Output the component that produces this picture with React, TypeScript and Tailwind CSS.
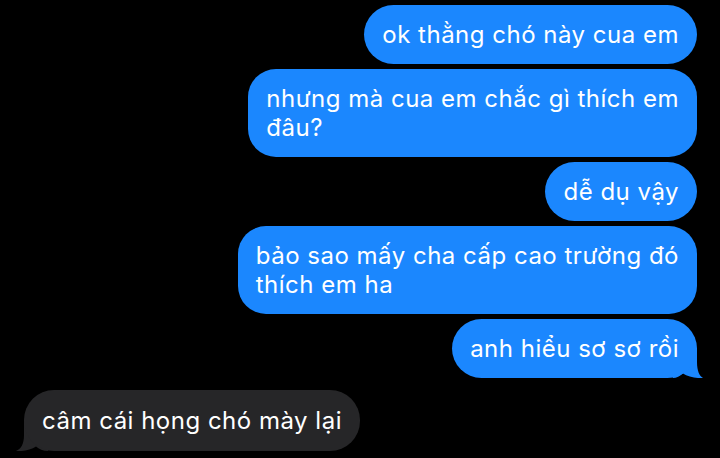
import React from "react";

const BLUE = "#1b87fe";

function TailRight() {
  return (
    <svg
      className="absolute bottom-0 right-[-6px]"
      width="30"
      height="30"
      viewBox="0 0 30 30"
    >
      <path
        d="M0 0 H24 V14 C24 23 26.5 28 30 30 C25 30.6 15 29 10 25.5 C7 28.2 3.5 30 0 30 Z"
        fill={BLUE}
      />
    </svg>
  );
}

function TailLeft() {
  return (
    <svg
      className="absolute bottom-0 left-[-8px]"
      width="32"
      height="30"
      viewBox="0 0 32 30"
    >
      <path
        d="M32 0 H8 V14 C8 23 5 28 0 30 C6 30.6 15 29 20 25.5 C23 28.2 27 30 32 30 Z"
        fill="#262628"
      />
    </svg>
  );
}

function Sent({ lines, tail }: { lines: string[]; tail?: boolean }) {
  return (
    <div className="relative self-end">
      {tail && <TailRight />}
      <div
        className={`relative bg-[#1b87fe] text-white px-[18px] py-[15px] ${
          lines.length > 1 ? "rounded-[28px]" : "rounded-[30px]"
        } text-[24px] leading-[29px] tracking-[0.5px] whitespace-nowrap`}
      >
        {lines.map((l, i) => (
          <div key={i}>{l}</div>
        ))}
      </div>
    </div>
  );
}

export default function App() {
  return (
    <div
      className="w-[720px] h-[458px] bg-black overflow-hidden flex flex-col gap-[5px] pt-[5px] pr-[23px] pl-[24px]"
      style={{ fontFamily: "Inter, 'Noto Sans', sans-serif" }}
    >
      <Sent lines={["ok thằng chó này cua em"]} />
      <Sent lines={["nhưng mà cua em chắc gì thích em", "đâu?"]} />
      <Sent lines={["dễ dụ vậy"]} />
      <Sent lines={["bảo sao mấy cha cấp cao trường đó", "thích em ha"]} />
      <Sent lines={["anh hiểu sơ sơ rồi"]} tail />
      <div className="relative self-start mt-[7px]">
        <TailLeft />
        <div className="relative bg-[#262628] text-white px-[18px] pt-[16px] pb-[16px] rounded-[30px] text-[24px] leading-[29px] tracking-[0.5px] whitespace-nowrap">
          câm cái họng chó mày lại
        </div>
      </div>
    </div>
  );
}
